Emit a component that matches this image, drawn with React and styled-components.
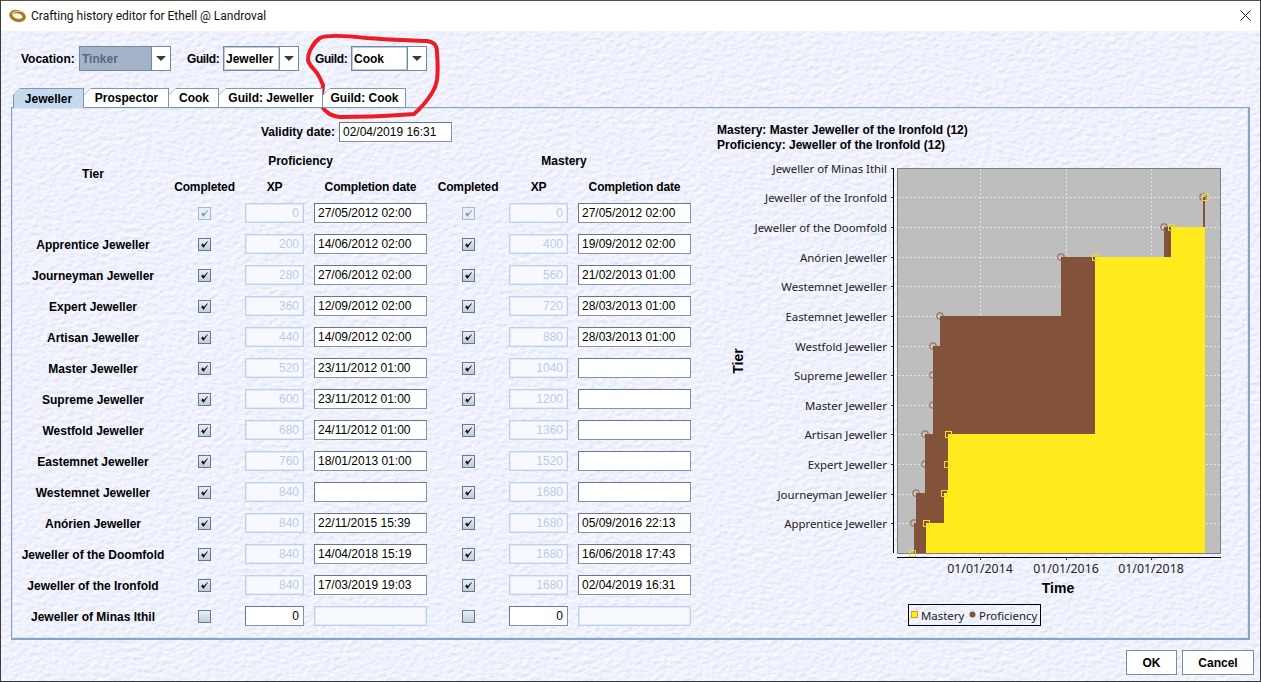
import styled, { createGlobalStyle } from 'styled-components';

const texture = `url("data:image/svg+xml,${encodeURIComponent(
  `<svg xmlns='http://www.w3.org/2000/svg' width='420' height='420'><filter id='t' x='0' y='0' width='100%' height='100%'><feTurbulence type='fractalNoise' baseFrequency='.17 .24' numOctaves='3' seed='7' stitchTiles='stitch'/><feDiffuseLighting lighting-color='#f0f2fe' surfaceScale='.62' diffuseConstant='1.13'><feDistantLight azimuth='60' elevation='62'/></feDiffuseLighting></filter><rect width='420' height='420' filter='url(#t)'/></svg>`
)}")`;

const GlobalStyle = createGlobalStyle`
  html, body { margin: 0; padding: 0; background: #fff; }
  body { font-family: "Liberation Sans", Arial, sans-serif; font-size: 12px; color: #000; }
  * { box-sizing: border-box; }
`;

const Win = styled.div`
  position: relative;
  width: 1261px;
  height: 682px;
  display: flex;
  flex-direction: column;
  overflow: hidden;
  border: 1px solid #3c3c3c;
  border-top-color: #5a5040;
  background: #eef0fb;
`;

const TitleBar = styled.div`
  height: 30px;
  flex: none;
  display: flex;
  align-items: center;
  padding-left: 7px;
  background: #fff;
  font-family: Roboto, "Noto Sans", sans-serif;
  font-size: 12px;
  color: #111;
`;

const TitleText = styled.span`
  margin-left: 4px;
  flex: 1;
`;

const CloseBtn = styled.div`
  width: 30px;
  display: flex;
  justify-content: center;
  margin-bottom: 2px;
`;

const Content = styled.div`
  flex: 1;
  display: flex;
  flex-direction: column;
  padding: 15px 6px 6px 10px;
  background-color: #eef0fb;
  background-image: ${texture};
`;

const Toolbar = styled.div`
  display: flex;
  align-items: center;
  height: 25px;
  padding-left: 10px;
`;

const FieldLabel = styled.span`
  font-weight: bold;
  flex: none;
  width: ${(p) => p.$w}px;
  margin-left: ${(p) => p.$ml || 0}px;
  letter-spacing: ${(p) => (p.$tight ? '-0.4px' : 'normal')};
`;

const Combo = styled.div`
  display: flex;
  width: ${(p) => p.$w}px;
  height: 25px;
  border: 1px solid #74889e;
  background: #fff;
`;

const ComboValue = styled.div`
  flex: 1;
  display: flex;
  align-items: center;
  padding-left: 1px;
  font-weight: bold;
  border: 1px solid ${(p) => (p.$disabled ? '#a3b4c8' : '#bccde0')};
  background: ${(p) => (p.$disabled ? '#a3b4c8' : '#fff')};
  color: ${(p) => (p.$disabled ? '#5a6878' : '#000')};
`;

const ComboArrow = styled.div`
  width: 19px;
  flex: none;
  display: flex;
  align-items: center;
  justify-content: center;
  border-left: 1px solid #74889e;
  &::after {
    content: '';
    border-left: 5.5px solid transparent;
    border-right: 5.5px solid transparent;
    border-top: 5px solid #3a3a3a;
  }
`;

const TabRow = styled.div`
  display: flex;
  height: 20px;
  margin: 17px 0 0 2px;
  position: relative;
  z-index: 1;
`;

const Tab = styled.div`
  width: ${(p) => p.$w}px;
  display: flex;
  align-items: center;
  justify-content: center;
  font-weight: bold;
  border: 1px solid #7f97b6;
  border-left-color: ${(p) => (p.$active ? '#7f97b6' : 'transparent')};
  border-bottom: ${(p) => (p.$active ? 'none' : '1px solid #7f97b6')};
  clip-path: polygon(7px 0, 100% 0, 100% 100%, 0 100%, 0 7px);
  background-origin: border-box;
  background-image: linear-gradient(
    135deg,
    transparent 4.3px,
    #7f97b6 4.3px,
    #7f97b6 5.4px,
    ${(p) => (p.$active ? '#c6daef' : '#fff')} 5.4px
  );
`;

const Panel = styled.div`
  flex: none;
  height: 533px;
  margin: -1px 4px 0 0;
  display: flex;
  border: 1px solid #88a5c8;
  border-bottom-width: 2px;
  border-right-width: 2px;
  box-shadow: inset 0 0 0 1px rgba(200, 218, 238, 0.55);
`;

const Form = styled.div`
  width: 680px;
  flex: none;
  padding: 14px 0 0 10px;
`;

const ValidityRow = styled.div`
  display: flex;
  justify-content: center;
  align-items: center;
  gap: 4px;
  height: 20px;
  width: 669px;
`;

const Grid = styled.div`
  display: grid;
  grid-template-columns: 142px 61px 59px 113px 62px 59px 113px;
  grid-template-rows: 18px 12px repeat(14, 20px);
  column-gap: 10px;
  row-gap: 11px;
  align-items: center;
  justify-items: center;
  margin-top: 9px;
`;

const GroupHead = styled.div`
  grid-column: ${(p) => p.$col};
  grid-row: 1;
  font-weight: bold;
  padding-top: 2px;
`;

const TierHead = styled.div`
  grid-column: 1;
  grid-row: 1 / span 2;
  font-weight: bold;
  margin-top: 5px;
`;

const ColHead = styled.div`
  grid-row: 2;
  grid-column: ${(p) => p.$col};
  font-weight: bold;
  white-space: nowrap;
  letter-spacing: -0.15px;
  padding-top: 2px;
`;

const RowLabel = styled.div`
  font-weight: bold;
  white-space: nowrap;
  padding-top: 2px;
`;

const TextField = styled.div`
  width: ${(p) => p.$w || 113}px;
  height: 20px;
  display: flex;
  align-items: center;
  padding: 0 4px 0 3px;
  justify-content: ${(p) => (p.$right ? 'flex-end' : 'flex-start')};
  font-size: 12px;
  border-style: solid;
  border-width: 1px;
  border-color: #66788c #8494a6 #8494a6 #66788c;
  background: #fff;
  ${(p) =>
    p.$off &&
    `
    border: 1px solid #bcd2ea;
    box-shadow: inset 0 0 0 1px #e0eaf6;
    background: #f8f9ff;
    color: #b9cde2;
  `}
`;

const Check = styled.div`
  width: 13px;
  height: 13px;
  display: flex;
  align-items: center;
  justify-content: center;
  border: 1px solid ${(p) => (p.$off ? '#a9b9cc' : '#66788c')};
  background: ${(p) => (p.$off ? '#e8eef7' : 'linear-gradient(#e8eef6, #bfcddd)')};
  color: ${(p) => (p.$off ? '#8a98a8' : '#111')};
`;

const ChartArea = styled.div`
  flex: 1;
  padding: 15px 0 0 25px;
  position: relative;
`;

const Summary = styled.div`
  font-weight: bold;
  line-height: 15px;
  height: 15px;
  white-space: nowrap;
`;

const ChartSvg = styled.svg`
  display: block;
  margin: 0 0 0 -5px;
  font-family: "Noto Sans", sans-serif;
`;

const Footer = styled.div`
  margin-top: 10px;
  display: flex;
  justify-content: flex-end;
  gap: 5px;
`;

const Button = styled.div`
  width: ${(p) => p.$w}px;
  height: 25px;
  display: flex;
  align-items: center;
  justify-content: center;
  font-weight: bold;
  background: #fff;
  border: 1px solid #7c8ca0;
`;

const Scribble = styled.svg`
  position: absolute;
  left: -1px;
  top: -1px;
  pointer-events: none;
`;

const tiers = [
  ['', '0', '27/05/2012 02:00', '0', '27/05/2012 02:00'],
  ['Apprentice Jeweller', '200', '14/06/2012 02:00', '400', '19/09/2012 02:00'],
  ['Journeyman Jeweller', '280', '27/06/2012 02:00', '560', '21/02/2013 01:00'],
  ['Expert Jeweller', '360', '12/09/2012 02:00', '720', '28/03/2013 01:00'],
  ['Artisan Jeweller', '440', '14/09/2012 02:00', '880', '28/03/2013 01:00'],
  ['Master Jeweller', '520', '23/11/2012 01:00', '1040', ''],
  ['Supreme Jeweller', '600', '23/11/2012 01:00', '1200', ''],
  ['Westfold Jeweller', '680', '24/11/2012 01:00', '1360', ''],
  ['Eastemnet Jeweller', '760', '18/01/2013 01:00', '1520', ''],
  ['Westemnet Jeweller', '840', '', '1680', ''],
  ['Anórien Jeweller', '840', '22/11/2015 15:39', '1680', '05/09/2016 22:13'],
  ['Jeweller of the Doomfold', '840', '14/04/2018 15:19', '1680', '16/06/2018 17:43'],
  ['Jeweller of the Ironfold', '840', '17/03/2019 19:03', '1680', '02/04/2019 16:31'],
  ['Jeweller of Minas Ithil', '0', '', '0', ''],
];

const yLabels = [
  'Jeweller of Minas Ithil',
  'Jeweller of the Ironfold',
  'Jeweller of the Doomfold',
  'Anórien Jeweller',
  'Westemnet Jeweller',
  'Eastemnet Jeweller',
  'Westfold Jeweller',
  'Supreme Jeweller',
  'Master Jeweller',
  'Artisan Jeweller',
  'Expert Jeweller',
  'Journeyman Jeweller',
  'Apprentice Jeweller',
];

const yTicks = [168, 197, 227, 257, 286, 316, 346, 375, 405, 434, 464, 494, 523];
const xTicks = [
  [980, '01/01/2014'],
  [1066, '01/01/2016'],
  [1151, '01/01/2018'],
];

const circles = [
  [914, 523], [916, 493], [925, 464], [925, 434], [933, 405], [933, 375],
  [933, 346], [940, 316], [1061, 257], [1164, 227], [1203, 197],
];
const squares = [
  [912, 553], [926, 523], [944, 493], [947, 464], [948, 434], [1095, 257], [1171, 227], [1205, 197],
];

const brownArea =
  'M914 553V523H916V493H925V434H933V346H940V316H1061V257H1164V227H1203V197H1205V553Z';
const yellowArea = 'M926 553V523H944V493H948V434H1095V257H1171V227H1205V553Z';

// chart svg starts at this page offset
const ox = 712;
const oy = 153;

function Chart() {
  return (
    <ChartSvg width="520" height="480" viewBox={`${ox} ${oy} 520 480`}>
      <rect x="897.5" y="168.5" width="323" height="385" fill="#bebebe" stroke="#7d7d7d" />
      {yTicks.slice(1).map((y) => (
        <line key={y} x1="898" x2="1220" y1={y + 0.5} y2={y + 0.5} stroke="#e4e4e4" strokeDasharray="2 2" />
      ))}
      {xTicks.map(([x]) => (
        <line key={x} x1={x + 0.5} x2={x + 0.5} y1="169" y2="553" stroke="#e4e4e4" strokeDasharray="2 2" />
      ))}
      {circles.map(([x, y]) => (
        <circle key={`${x}-${y}`} cx={x} cy={y} r="3.2" fill="none" stroke="#9a7360" strokeWidth="1.2" />
      ))}
      <path d={brownArea} fill="#82523a" />
      <path d={yellowArea} fill="#ffeb1e" />
      {squares.map(([x, y]) => (
        <rect key={`${x}-${y}`} x={x - 3 + 0.5} y={y - 3 + 0.5} width="6" height="6" fill="none" stroke="#f6dc1a" strokeWidth="1" />
      ))}
      <line x1="893.5" x2="893.5" y1="168" y2="553" stroke="#000" />
      {yTicks.map((y) => (
        <line key={y} x1="891" x2="893" y1={y + 0.5} y2={y + 0.5} stroke="#333" />
      ))}
      {yLabels.map((label, i) => (
        <text key={label} x="887" y={yTicks[i] + 5} textAnchor="end" fontSize="11.4" fill="#222">
          {label}
        </text>
      ))}
      <line x1="897" x2="1221" y1="557.5" y2="557.5" stroke="#000" />
      {xTicks.map(([x, label]) => (
        <g key={x}>
          <line x1={x + 0.5} x2={x + 0.5} y1="558" y2="560" stroke="#333" />
          <text x={x} y="573" textAnchor="middle" fontSize="12.3" fill="#222">
            {label}
          </text>
        </g>
      ))}
      <text x="1058" y="593" textAnchor="middle" fontSize="14" fontWeight="bold" fill="#000" fontFamily="Liberation Sans, sans-serif">
        Time
      </text>
      <text transform="translate(743 361) rotate(-90)" textAnchor="middle" fontSize="14" fontWeight="bold" fill="#000" fontFamily="Liberation Sans, sans-serif">
        Tier
      </text>
      <rect x="908.5" y="604.5" width="132" height="21" fill="none" stroke="#000" />
      <rect x="911.5" y="611.5" width="6" height="6" fill="#ffeb1e" stroke="#caa90c" />
      <text x="921" y="620" fontSize="11.4" fill="#222">Mastery</text>
      <circle cx="972.5" cy="614.5" r="3" fill="#82523a" />
      <text x="979" y="620" fontSize="11.4" fill="#222">Proficiency</text>
    </ChartSvg>
  );
}

function CheckMark() {
  return (
    <svg width="9" height="9" viewBox="0 0 9 9">
      <path d="M1.5 5 L3.5 7.5 L7.5 1.5 L4 5.2 L2.8 3.8 Z" fill="currentColor" stroke="currentColor" strokeWidth="0.6" />
    </svg>
  );
}

function TierRow({ tier, index }) {
  const [label, xp, date, mxp, mdate] = tier;
  const last = index === tiers.length - 1;
  return (
    <>
      <RowLabel>{label}</RowLabel>
      <Check $off={index === 0}>{!last && <CheckMark />}</Check>
      <TextField $w={59} $right $off={!last}>{xp}</TextField>
      <TextField $off={last}>{date}</TextField>
      <Check $off={index === 0}>{!last && <CheckMark />}</Check>
      <TextField $w={59} $right $off={!last}>{mxp}</TextField>
      <TextField $off={last}>{mdate}</TextField>
    </>
  );
}

export default function App() {
  return (
    <>
      <GlobalStyle />
      <Win>
        <TitleBar>
          <svg width="19" height="16" viewBox="0 0 19 16">
            <ellipse cx="9.5" cy="8" rx="6.8" ry="4.2" fill="none" stroke="#b07a22" strokeWidth="3.4" transform="rotate(15 9.5 8)" />
            <path d="M3.5 5.8 Q8 1.6 14.5 3.6" fill="none" stroke="#ecd08a" strokeWidth="1.1" />
          </svg>
          <TitleText>Crafting history editor for Ethell @ Landroval</TitleText>
          <CloseBtn>
            <svg width="11" height="11" viewBox="0 0 11 11">
              <path d="M0.5 0.5L10.5 10.5M10.5 0.5L0.5 10.5" stroke="#222" strokeWidth="1" />
            </svg>
          </CloseBtn>
        </TitleBar>
        <Content>
          <Toolbar>
            <FieldLabel $w={58}>Vocation:</FieldLabel>
            <Combo $w={92}>
              <ComboValue $disabled>Tinker</ComboValue>
              <ComboArrow />
            </Combo>
            <FieldLabel $ml={16} $w={36} $tight>Guild:</FieldLabel>
            <Combo $w={76}>
              <ComboValue>Jeweller</ComboValue>
              <ComboArrow />
            </Combo>
            <FieldLabel $ml={16} $w={36} $tight>Guild:</FieldLabel>
            <Combo $w={76}>
              <ComboValue>Cook</ComboValue>
              <ComboArrow />
            </Combo>
          </Toolbar>
          <TabRow>
            <Tab $w={71} $active>Jeweller</Tab>
            <Tab $w={85}>Prospector</Tab>
            <Tab $w={50}>Cook</Tab>
            <Tab $w={104}>Guild: Jeweller</Tab>
            <Tab $w={83}>Guild: Cook</Tab>
          </TabRow>
          <Panel>
            <Form>
              <ValidityRow>
                <FieldLabel>Validity date:</FieldLabel>
                <TextField>02/04/2019 16:31</TextField>
              </ValidityRow>
              <Grid>
                <TierHead>Tier</TierHead>
                <GroupHead $col="2 / span 3">Proficiency</GroupHead>
                <GroupHead $col="5 / span 3">Mastery</GroupHead>
                <ColHead $col={2}>Completed</ColHead>
                <ColHead $col={3}>XP</ColHead>
                <ColHead $col={4}>Completion date</ColHead>
                <ColHead $col={5}>Completed</ColHead>
                <ColHead $col={6}>XP</ColHead>
                <ColHead $col={7}>Completion date</ColHead>
                {tiers.map((tier, i) => (
                  <TierRow key={i} tier={tier} index={i} />
                ))}
              </Grid>
            </Form>
            <ChartArea>
              <Summary>Mastery: Master Jeweller of the Ironfold (12)</Summary>
              <Summary>Proficiency: Jeweller of the Ironfold (12)</Summary>
              <Chart />
            </ChartArea>
          </Panel>
          <Footer>
            <Button $w={51}>OK</Button>
            <Button $w={72}>Cancel</Button>
          </Footer>
        </Content>
        <Scribble width="1261" height="682" viewBox="0 0 1261 682">
          <path
            d="M320 38C326 35 340 35 367 38C390 40 410 40 427 41C434 42 437 45 437 52C438 65 438 72 437 80C436 86 434 90 432 93C427 101 421 108 414 114C390 116 360 117 340 117C333 116 329 114 327 112C323 109 321 107 321 103C321 96 323 91 323 85C321 80 319 76 317 73C313 68 309 65 308 60C308 54 310 50 312 47C314 43 317 40 320 38Z"
            fill="none"
            stroke="#ed1c24"
            strokeWidth="4"
          />
        </Scribble>
      </Win>
    </>
  );
}
